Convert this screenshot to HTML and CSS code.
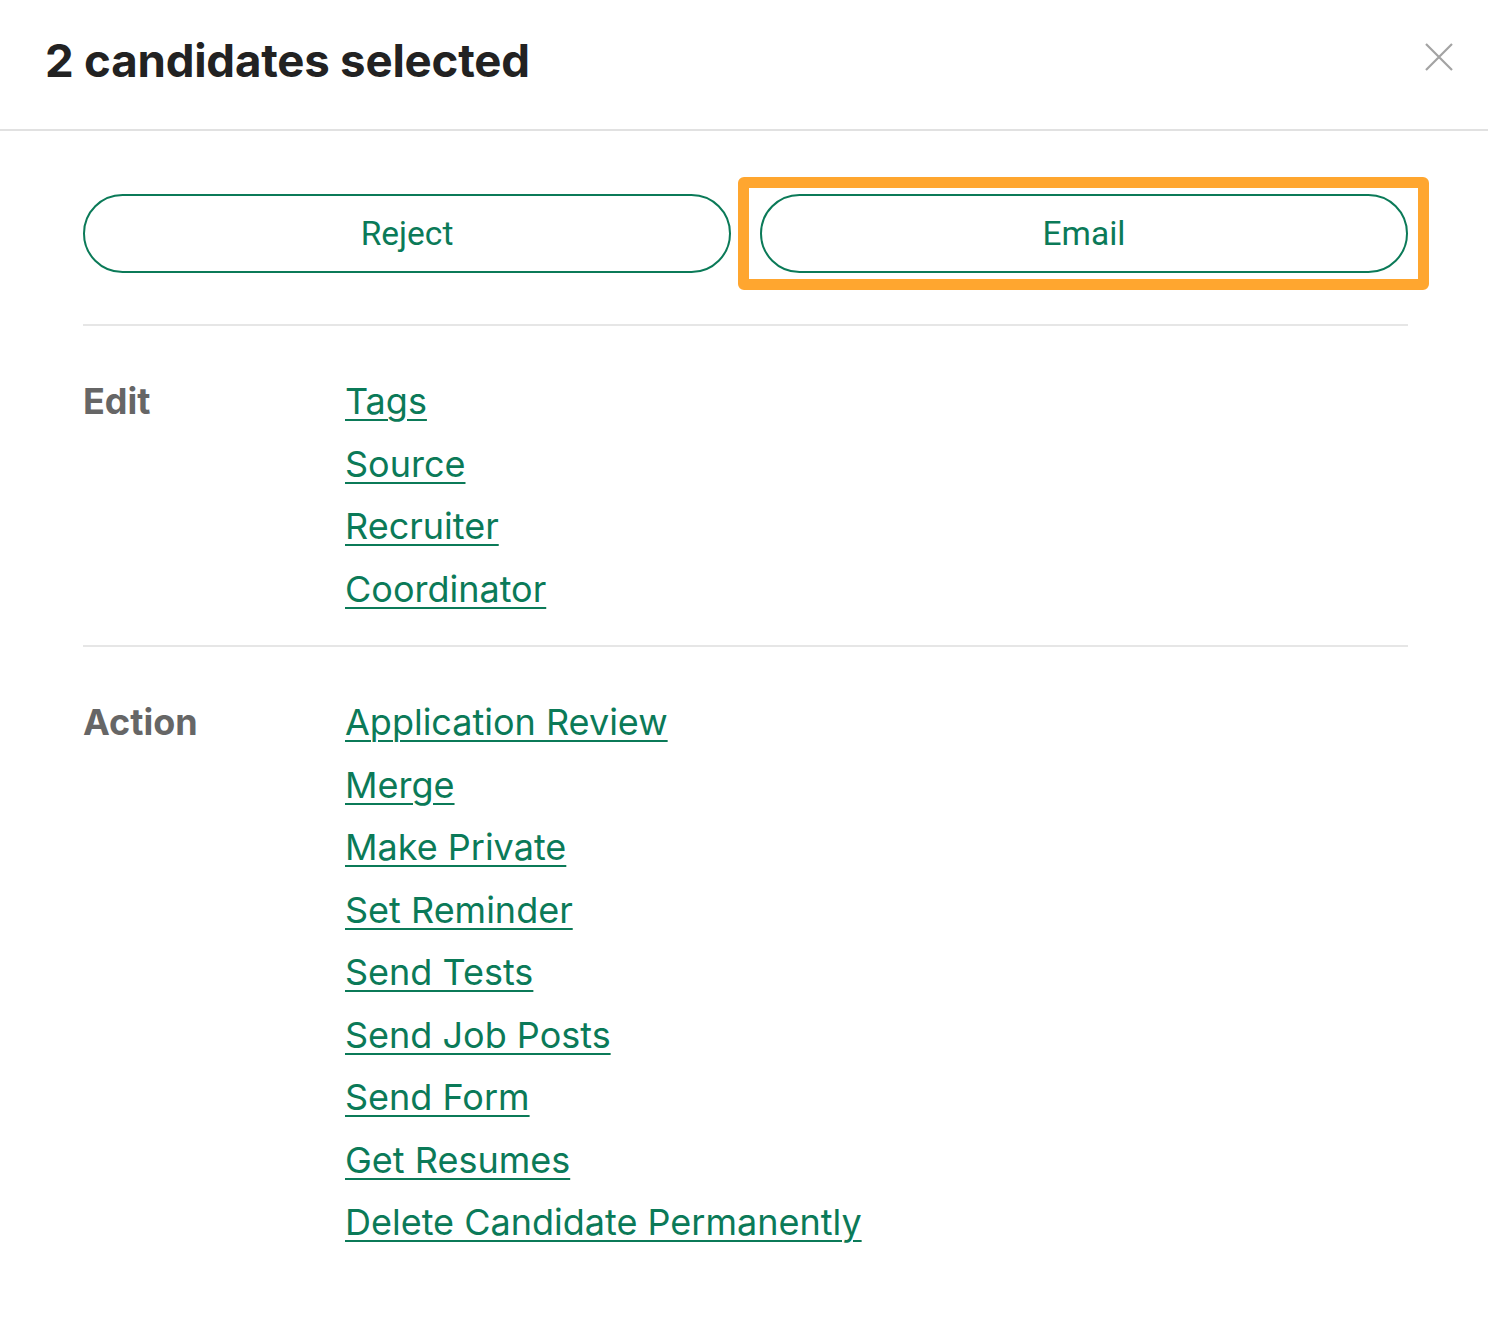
FILE: index.html
```html
<!DOCTYPE html>
<html>
<head>
<meta charset="utf-8">
<link rel="stylesheet" href="styles.css">
</head>
<body>
<div class="modal">
  <header class="modal-header">
    <h1 class="title">2 candidates selected</h1>
    <button class="close" aria-label="Close">
      <svg width="30" height="30" viewBox="0 0 30 30"><path d="M2 2 L28 28 M28 2 L2 28" stroke="#a3a3a3" stroke-width="2.2" fill="none"/></svg>
    </button>
  </header>
  <div class="modal-body">
    <div class="buttons">
      <button class="pill">Reject</button>
      <div class="highlight-wrap">
        <button class="pill">Email</button>
      </div>
    </div>
    <section class="group">
      <div class="label">Edit</div>
      <ul class="links">
        <li><a href="#">Tags</a></li>
        <li><a href="#">Source</a></li>
        <li><a href="#">Recruiter</a></li>
        <li><a href="#">Coordinator</a></li>
      </ul>
    </section>
    <section class="group last">
      <div class="label">Action</div>
      <ul class="links">
        <li><a href="#">Application Review</a></li>
        <li><a href="#">Merge</a></li>
        <li><a href="#">Make Private</a></li>
        <li><a href="#">Set Reminder</a></li>
        <li><a href="#">Send Tests</a></li>
        <li><a href="#">Send Job Posts</a></li>
        <li><a href="#">Send Form</a></li>
        <li><a href="#">Get Resumes</a></li>
        <li><a href="#">Delete Candidate Permanently</a></li>
      </ul>
    </section>
  </div>
</div>
</body>
</html>
```

FILE: styles.css
```css
* { box-sizing: border-box; }
html, body { margin: 0; padding: 0; background: #fff; }
body { font-family: Inter, "Noto Sans", sans-serif; color: #222; }

.modal-header {
  height: 131px;
  border-bottom: 2px solid #e1e1e1;
  display: flex;
  align-items: flex-start;
  justify-content: space-between;
  padding: 0 34px 0 45px;
}
.title {
  margin: 34px 0 0;
  font-size: 45.6px;
  font-weight: 700;
  line-height: 54px;
  color: #222;
  letter-spacing: -0.2px;
}
.close {
  margin-top: 42px;
  background: none;
  border: 0;
  padding: 0;
  width: 30px;
  height: 30px;
  cursor: pointer;
}
.close svg { display: block; }

.modal-body { padding: 0 80px 0 83px; }

.buttons {
  display: grid;
  grid-template-columns: 1fr 1fr;
  gap: 29px;
  padding: 63px 0 51px 0;
  border-bottom: 2px solid #e6e6e6;
}
.pill {
  width: 100%;
  height: 79px;
  border: 2px solid #0b7a58;
  border-radius: 40px;
  background: #fff;
  color: #0b7a58;
  font-family: Roboto, sans-serif;
  font-size: 33.5px;
  cursor: pointer;
}
.highlight-wrap {
  position: relative;
}
.highlight-wrap::after {
  content: "";
  position: absolute;
  top: -17px;
  bottom: -17px;
  left: -22px;
  right: -21px;
  border: 11px solid #ffa62f;
  border-radius: 6px;
  pointer-events: none;
}

.group {
  display: grid;
  grid-template-columns: 262px 1fr;
  padding: 44px 0 25px 0;
  border-bottom: 2px solid #e6e6e6;
}
.group.last { border-bottom: 0; }
.label {
  font-size: 36px;
  font-weight: 700;
  color: #666;
  line-height: 62.5px;
}
.links { list-style: none; margin: 0; padding: 0; }
.links li { line-height: 62.5px; font-size: 36px; }
.links a {
  color: #0b7a58;
  text-decoration: underline;
  text-decoration-thickness: 2px;
  text-underline-offset: 5px;
}
```
